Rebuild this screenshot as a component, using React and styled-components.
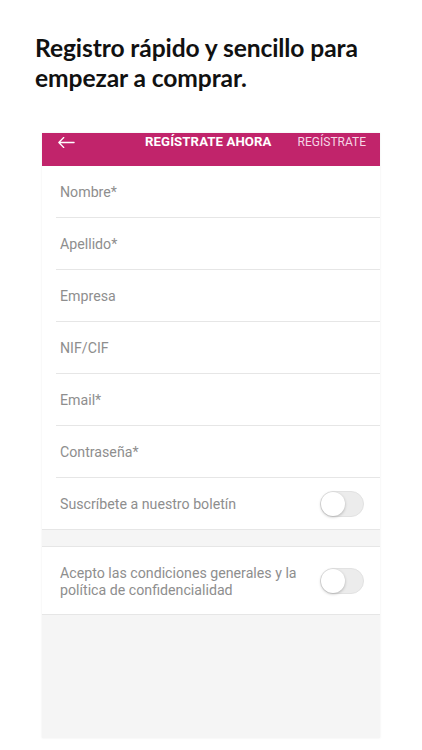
import styled, { createGlobalStyle } from "styled-components";

const GlobalStyle = createGlobalStyle`
    body {
        margin: 0;
        background: #ffffff;
        font-family: "Liberation Sans", Arial, sans-serif;
    }
`;

const fields = ["Nombre*", "Apellido*", "Empresa", "NIF/CIF", "Email*", "Contraseña*"];

function Toggle() {
    return (
        <Switch>
            <Knob />
        </Switch>
    );
}

function App() {
    return (
        <Page>
            <GlobalStyle />
            <Headline>
                Registro rápido y sencillo para
                <br />
                empezar a comprar.
            </Headline>

            <Phone>
                <NavBar>
                    <BackArrow viewBox="0 0 20 14">
                        <path d="M19 7H2M7.5 1.5L2 7l5.5 5.5" />
                    </BackArrow>
                    <NavTitle>REGÍSTRATE AHORA</NavTitle>
                    <NavAction>REGÍSTRATE</NavAction>
                </NavBar>

                {fields.map((field) => (
                    <FieldRow key={field}>
                        <Label>{field}</Label>
                    </FieldRow>
                ))}

                <SwitchRow>
                    <Label>Suscríbete a nuestro boletín</Label>
                    <Toggle />
                </SwitchRow>

                <Spacer />

                <SwitchRow tall>
                    <Label>
                        Acepto las condiciones generales y la
                        <br />
                        política de confidencialidad
                    </Label>
                    <Toggle />
                </SwitchRow>

                <Filler />
            </Phone>
        </Page>
    );
}

const Page = styled.div`
    width: 422px;
    height: 750px;
    overflow: hidden;
    padding-top: 33px;
    box-sizing: border-box;
`;

const Headline = styled.h1`
    margin: 0 0 40px 35px;
    font-family: Lato, "Open Sans", sans-serif;
    font-weight: 700;
    font-size: 24.6px;
    line-height: 30px;
    color: #111111;
    letter-spacing: -0.1px;
`;

const Phone = styled.div`
    margin-left: 42px;
    width: 338px;
    background: #ffffff;
    box-shadow: 0 0 2px rgba(0, 0, 0, 0.08);
    display: flex;
    flex-direction: column;
`;

const NavBar = styled.div`
    height: 33px;
    background: #c1246b;
    display: flex;
    align-items: flex-start;
    padding: 2px 14px 0 15px;
    box-sizing: border-box;
    color: #ffffff;
`;

const BackArrow = styled.svg`
    width: 18px;
    height: 13px;
    margin-top: 1px;
    fill: none;
    stroke: #ffffff;
    stroke-width: 1.4;
    stroke-linecap: round;
    stroke-linejoin: round;
`;

const NavTitle = styled.div`
    margin-left: 70px;
    font-family: Roboto, "Liberation Sans", sans-serif;
    font-weight: 700;
    font-size: 13.2px;
    line-height: 14px;
    letter-spacing: 0.1px;
`;

const NavAction = styled.div`
    margin-left: auto;
    font-family: Roboto, "Liberation Sans", sans-serif;
    font-size: 12px;
    line-height: 14px;
    color: #f6d6e6;
`;

const FieldRow = styled.div`
    height: 52px;
    margin-left: 14px;
    padding: 2px 0 0 4px;
    display: flex;
    align-items: center;
    border-bottom: 1px solid #e6e6e6;
    box-sizing: border-box;
`;

const Label = styled.div`
    font-family: Roboto, "Liberation Sans", sans-serif;
    font-size: 14.2px;
    line-height: 17px;
    color: #8e8e8e;
`;

const SwitchRow = styled.div`
    height: ${(p) => (p.tall ? "68px" : "52px")};
    padding: 2px 16px 0 18px;
    display: flex;
    align-items: center;
    justify-content: space-between;
    border-bottom: 1px solid #e6e6e6;
    box-sizing: border-box;
`;

const Switch = styled.div`
    width: 44px;
    height: 26px;
    margin-top: -2px;
    border-radius: 13px;
    background: #ececec;
    border: 1px solid #e2e2e2;
    box-sizing: border-box;
    position: relative;
    flex-shrink: 0;
`;

const Knob = styled.div`
    position: absolute;
    left: 0;
    top: 0;
    width: 24px;
    height: 24px;
    border-radius: 50%;
    background: #ffffff;
    box-shadow: 0 1px 3px rgba(0, 0, 0, 0.25);
`;

const Spacer = styled.div`
    height: 16px;
    background: #f5f5f5;
    border-bottom: 1px solid #e6e6e6;
`;

const Filler = styled.div`
    height: 123px;
    background: #f5f5f5;
`;

export default App;
